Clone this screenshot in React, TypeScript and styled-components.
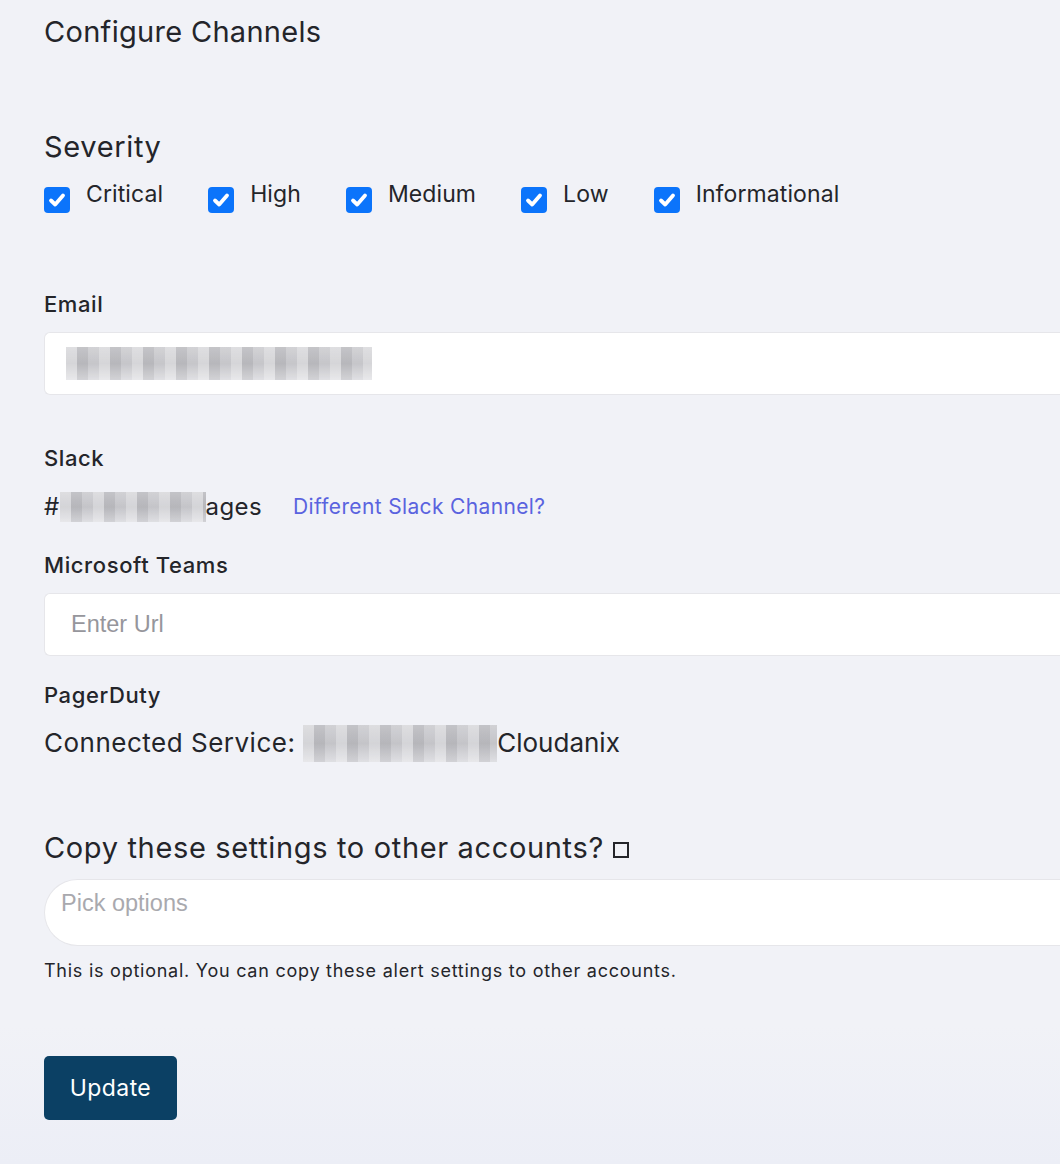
import React from 'react'
import styled, { createGlobalStyle } from 'styled-components'

const GlobalStyle = createGlobalStyle`
  html, body {
    margin: 0;
    padding: 0;
  }
  body {
    background: linear-gradient(180deg, #f1f2f7 0%, #f1f2f7 88%, #eceef6 100%);
    font-family: Inter, "Open Sans", sans-serif;
    color: #24252a;
    min-height: 1164px;
    overflow: hidden;
  }
`

const Page = styled.div`
  padding: 16px 0 40px 44px;
  display: flex;
  flex-direction: column;
  width: 1100px;
`

const Title = styled.h1`
  margin: 0;
  font-size: 29px;
  line-height: 32px;
  font-weight: 400;
  letter-spacing: 0.3px;
`

const SectionHeading = styled.h2<{ $top: number }>`
  margin: ${(p) => p.$top}px 0 0;
  font-size: 29px;
  line-height: 36px;
  font-weight: 400;
  letter-spacing: 0.65px;
  display: flex;
  align-items: center;
  gap: 9px;
`

const CheckRow = styled.div`
  margin-top: 16px;
  display: flex;
  gap: 45px;
`

const CheckItem = styled.label`
  display: flex;
  align-items: flex-start;
  gap: 16px;
  font-size: 23px;
  line-height: 26px;
  letter-spacing: 0.1px;
  cursor: pointer;
`

const Box = styled.span`
  margin-top: 6px;
  width: 26px;
  height: 26px;
  border-radius: 4px;
  background: #0b74fb;
  display: inline-flex;
  align-items: center;
  justify-content: center;
  flex-shrink: 0;
`

const Label = styled.div<{ $top: number }>`
  margin-top: ${(p) => p.$top}px;
  font-size: 22px;
  line-height: 28px;
  font-weight: 500;
  letter-spacing: 0.6px;
`

const Field = styled.div<{ $top: number; $pill?: boolean }>`
  margin-top: ${(p) => p.$top}px;
  height: ${(p) => (p.$pill ? 67 : 63)}px;
  background: #fff;
  border: 1px solid #e6e6ea;
  border-right: none;
  border-radius: ${(p) => (p.$pill ? '34px 0 0 34px' : '6px 0 0 6px')};
  box-sizing: border-box;
  display: flex;
  align-items: ${(p) => (p.$pill ? 'flex-start' : 'center')};
  padding: ${(p) => (p.$pill ? '10px 0 0 16px' : '0 0 0 21px')};
`

const Placeholder = styled.span<{ $light?: boolean }>`
  font-family: "Liberation Sans", Arial, sans-serif;
  font-size: 23.5px;
  padding-left: ${(p) => (p.$light ? 0 : 5)}px;
  color: ${(p) => (p.$light ? '#a9a9ae' : '#96969c')};
  font-weight: 400;
`

const Mosaic = styled.span<{ $w: number; $h: number }>`
  display: inline-block;
  width: ${(p) => p.$w}px;
  height: ${(p) => p.$h}px;
  vertical-align: middle;
  background:
    repeating-linear-gradient(90deg, rgba(255, 255, 255, 0.35) 0 11px, rgba(0, 0, 0, 0.05) 11px 22px, rgba(255, 255, 255, 0.1) 22px 33px),
    linear-gradient(180deg, #c9c9cd 0%, #b9b9be 50%, #dadade 100%);
  opacity: 0.9;
`

const SlackRow = styled.div`
  margin-top: 19px;
  height: 32px;
  display: flex;
  align-items: center;
  font-size: 24px;
  line-height: 32px;
`

const Channel = styled.span`
  display: inline-flex;
  align-items: center;
  letter-spacing: 0.4px;
`

const LinkText = styled.a`
  margin-left: 31px;
  color: #5a63df;
  font-size: 21px;
  letter-spacing: 0.35px;
  text-decoration: none;
  cursor: pointer;
`

const ServiceLine = styled.div`
  margin-top: 17px;
  height: 34px;
  font-size: 26px;
  line-height: 34px;
  letter-spacing: 0.5px;
  display: flex;
  align-items: center;
`

const ServiceName = styled.span`
  letter-spacing: 0;
`

const Tofu = styled.span`
  display: inline-block;
  width: 12px;
  height: 12px;
  border: 2px solid #24252a;
  margin-top: 4px;
`

const Help = styled.p`
  margin: 14px 0 0;
  font-size: 18px;
  line-height: 22px;
  letter-spacing: 0.75px;
`

const Button = styled.button`
  margin-top: 74px;
  align-self: flex-start;
  width: 133px;
  height: 64px;
  border: none;
  border-radius: 5px;
  background: #0b4064;
  color: #fff;
  font-family: inherit;
  font-size: 23px;
  letter-spacing: 0.4px;
  cursor: pointer;
`

const Check = () => (
  <svg width="20" height="20" viewBox="0 0 20 20">
    <path d="M4 10.5 L8.2 14.5 L16 5.5" fill="none" stroke="#fff" strokeWidth="3.8" strokeLinecap="round" strokeLinejoin="round" />
  </svg>
)

const severities = ['Critical', 'High', 'Medium', 'Low', 'Informational']

export default function App() {
  return (
    <>
      <GlobalStyle />
      <Page>
        <Title>Configure Channels</Title>

        <SectionHeading $top={81}>Severity</SectionHeading>
        <CheckRow>
          {severities.map((s) => (
            <CheckItem key={s}>
              <Box><Check /></Box>
              {s}
            </CheckItem>
          ))}
        </CheckRow>

        <Label $top={77}>Email</Label>
        <Field $top={14}>
          <Mosaic $w={306} $h={33} />
        </Field>

        <Label $top={49}>Slack</Label>
        <SlackRow>
          <Channel>
            #<Mosaic $w={146} $h={30} />ages
          </Channel>
          <LinkText>Different Slack Channel?</LinkText>
        </SlackRow>

        <Label $top={28}>Microsoft Teams</Label>
        <Field $top={14}>
          <Placeholder>Enter Url</Placeholder>
        </Field>

        <Label $top={25}>PagerDuty</Label>
        <ServiceLine>
          Connected Service:&nbsp;<Mosaic $w={194} $h={37} /><ServiceName>Cloudanix</ServiceName>
        </ServiceLine>

        <SectionHeading $top={70}>
          Copy these settings to other accounts?<Tofu />
        </SectionHeading>
        <Field $top={13} $pill>
          <Placeholder $light>Pick options</Placeholder>
        </Field>
        <Help>This is optional. You can copy these alert settings to other accounts.</Help>

        <Button>Update</Button>
      </Page>
    </>
  )
}
